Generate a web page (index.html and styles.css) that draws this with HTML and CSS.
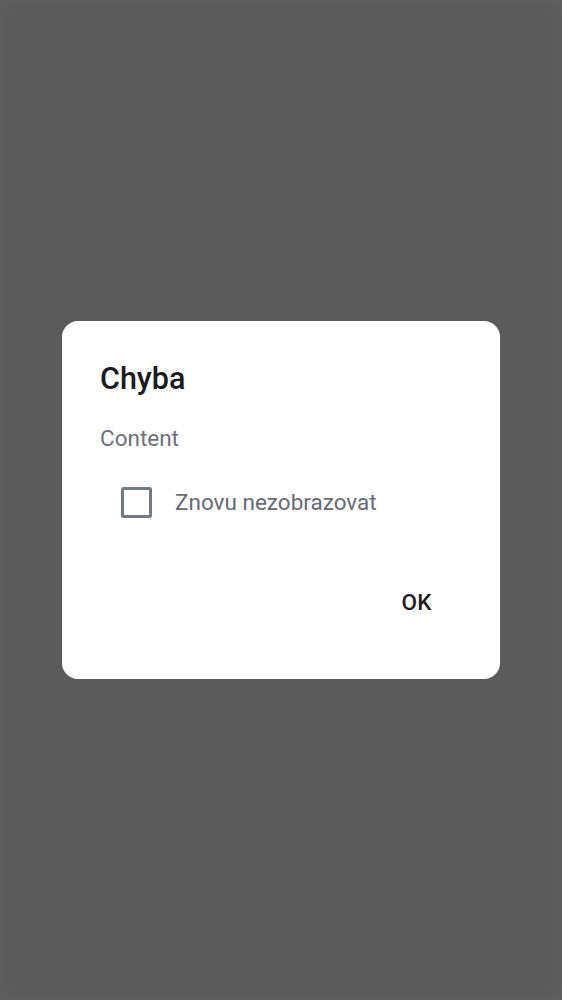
FILE: index.html
```html
<!DOCTYPE html>
<html lang="cs">
<head>
<meta charset="utf-8">
<link rel="stylesheet" href="styles.css">
</head>
<body>
<div class="screen">
  <div class="dialog">
    <h1 class="title">Chyba</h1>
    <p class="content">Content</p>
    <label class="check-row">
      <span class="box"></span>
      <span class="check-label">Znovu nezobrazovat</span>
    </label>
    <div class="actions">
      <button class="btn">OK</button>
    </div>
  </div>
</div>
</body>
</html>
```
FILE: styles.css
```css
html, body {
  margin: 0;
  padding: 0;
}
body {
  font-family: Roboto, "Noto Sans", sans-serif;
}
.screen {
  width: 562px;
  height: 1000px;
  background: #5b5b5b;
  box-shadow: inset 0 0 24px rgba(255, 255, 255, 0.035);
  display: flex;
  justify-content: center;
  padding-top: 321px;
  box-sizing: border-box;
}
.dialog {
  width: 438px;
  height: 358px;
  background: #ffffff;
  border-radius: 16px;
  box-sizing: border-box;
  padding: 40px 0 0 38px;
  display: flex;
  flex-direction: column;
}
.title {
  margin: 0;
  font-size: 30.5px;
  font-weight: 500;
  color: #1c1b1f;
  line-height: normal;
}
.content {
  margin: 28.5px 0 0 0;
  font-size: 22.5px;
  font-weight: 400;
  color: #6c717b;
  line-height: normal;
}
.check-row {
  display: flex;
  align-items: center;
  margin-top: 36px;
  margin-left: 21px;
  gap: 23px;
}
.box {
  width: 31px;
  height: 31px;
  box-sizing: border-box;
  border: 3px solid #747a84;
  border-radius: 2.5px;
  flex: none;
}
.check-label {
  font-size: 22.5px;
  color: #666b75;
  line-height: 31px;
}
.actions {
  display: flex;
  justify-content: flex-end;
  margin-top: 71px;
  padding-right: 68px;
}
.btn {
  border: none;
  background: none;
  padding: 0;
  font-family: Roboto, "Noto Sans", sans-serif;
  font-size: 22.5px;
  font-weight: 500;
  color: #1c1b1f;
  line-height: normal;
  letter-spacing: 0.02em;
}
```
